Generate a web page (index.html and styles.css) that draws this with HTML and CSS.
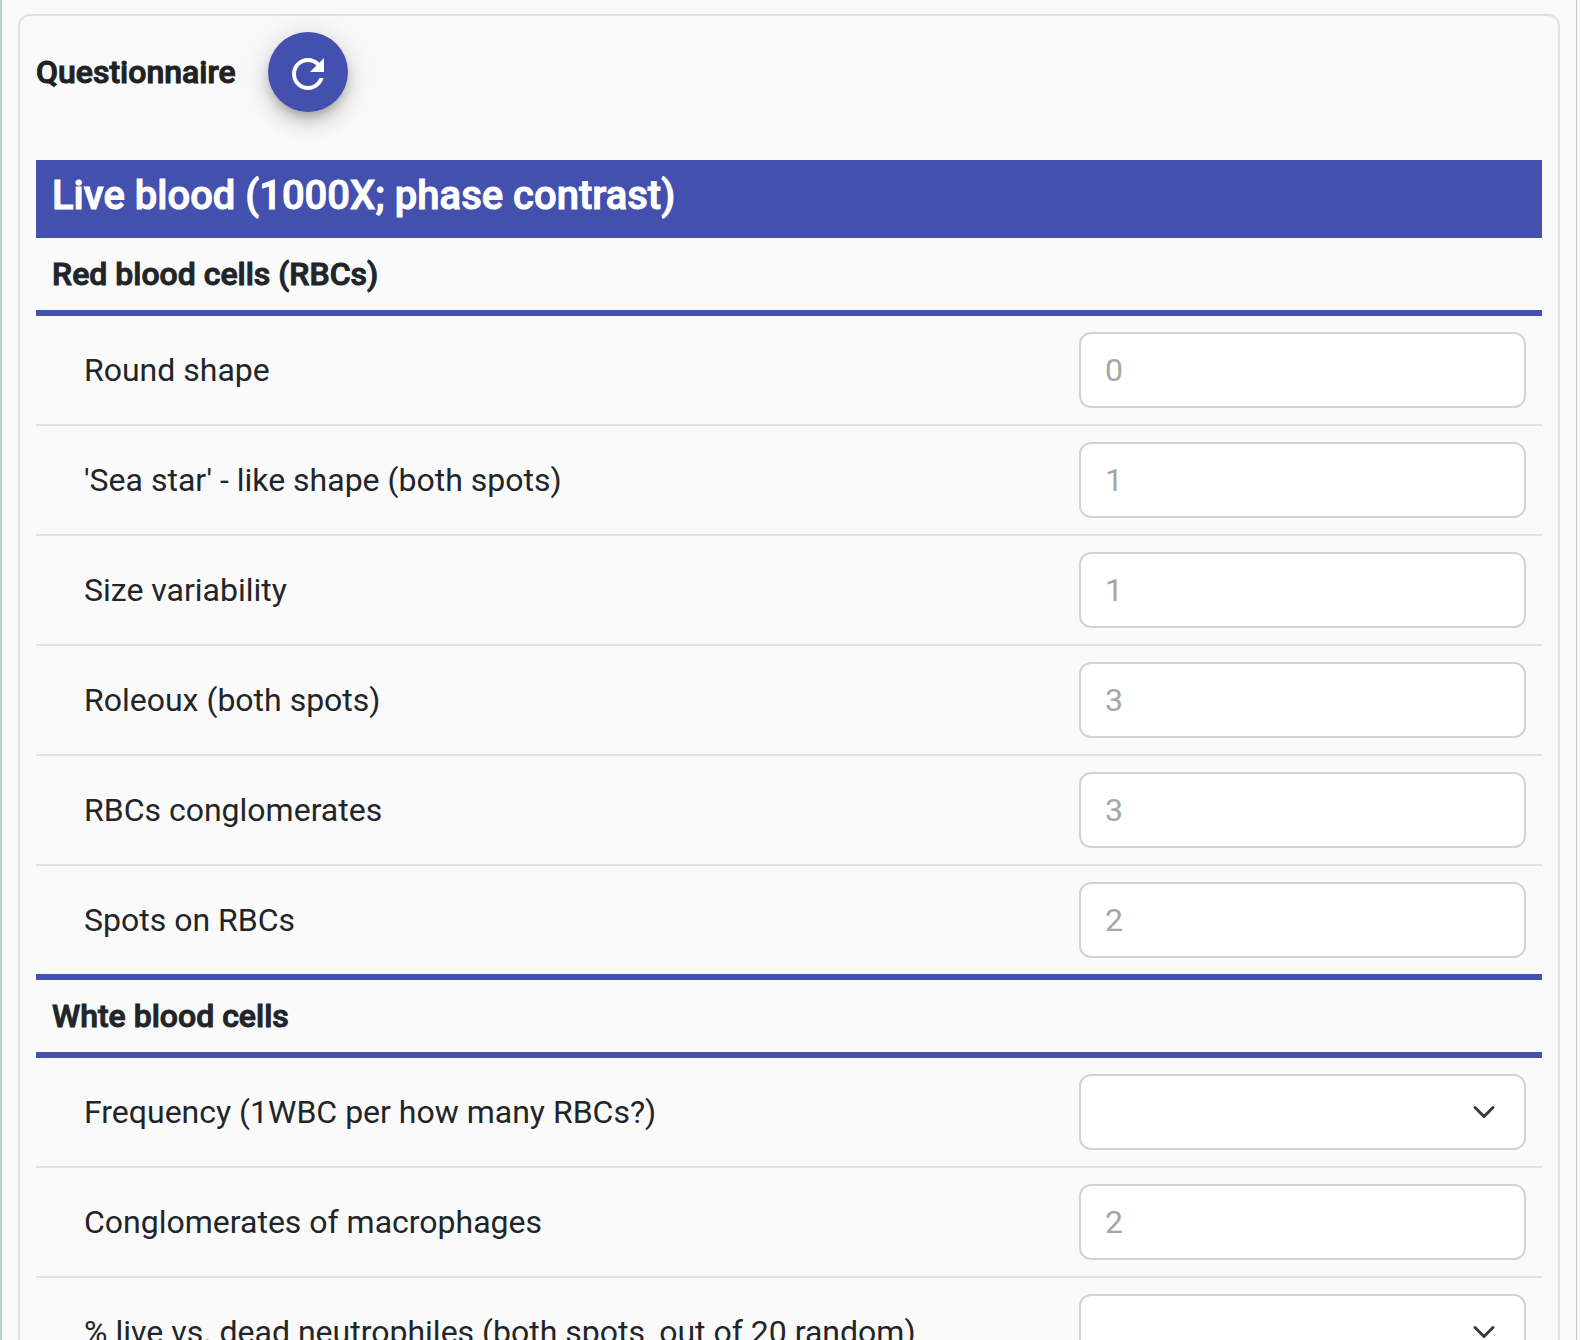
FILE: index.html
```html
<!DOCTYPE html>
<html lang="en">
<head>
<meta charset="utf-8">
<meta name="viewport" content="width=device-width, initial-scale=1">
<title>Questionnaire</title>
<link rel="stylesheet" href="styles.css">
</head>
<body>
<main class="panel">
  <form class="card">
    <header class="card-header">
      <h1 class="card-title">Questionnaire</h1>
      <button class="fab" type="button" aria-label="Reload">
        <svg class="fab-icon" viewBox="0 0 24 24" aria-hidden="true"><path fill="currentColor" d="M17.65 6.35C16.2 4.9 14.21 4 12 4c-4.42 0-7.99 3.58-7.99 8s3.57 8 7.99 8c3.73 0 6.84-2.55 7.73-6h-2.08c-.82 2.33-3.04 4-5.65 4-3.31 0-6-2.69-6-6s2.69-6 6-6c1.66 0 3.14.69 4.22 1.78L13 11h7V4l-2.35 2.35z"/></svg>
      </button>
    </header>

    <h2 class="banner">Live blood (1000X; phase contrast)</h2>

    <section class="group">
      <h3 class="group-title">Red blood cells (RBCs)</h3>
      <div class="row"><label class="label" for="round">Round shape</label><div class="field"><input class="control" id="round" type="text" placeholder="0"></div></div>
      <div class="row"><label class="label" for="star">'Sea star' - like shape (both spots)</label><div class="field"><input class="control" id="star" type="text" placeholder="1"></div></div>
      <div class="row"><label class="label" for="size">Size variability</label><div class="field"><input class="control" id="size" type="text" placeholder="1"></div></div>
      <div class="row"><label class="label" for="roleoux">Roleoux (both spots)</label><div class="field"><input class="control" id="roleoux" type="text" placeholder="3"></div></div>
      <div class="row"><label class="label" for="conglomerates">RBCs conglomerates</label><div class="field"><input class="control" id="conglomerates" type="text" placeholder="3"></div></div>
      <div class="row"><label class="label" for="spots">Spots on RBCs</label><div class="field"><input class="control" id="spots" type="text" placeholder="2"></div></div>
    </section>

    <section class="group">
      <h3 class="group-title">Whte blood cells</h3>
      <div class="row"><label class="label" for="frequency">Frequency (1WBC per how many RBCs?)</label><div class="field"><select class="control select" id="frequency"><option></option></select></div></div>
      <div class="row"><label class="label" for="macrophages">Conglomerates of macrophages</label><div class="field"><input class="control" id="macrophages" type="text" placeholder="2"></div></div>
      <div class="row"><label class="label" for="neutrophiles">% live vs. dead neutrophiles (both spots, out of 20 random)</label><div class="field"><select class="control select" id="neutrophiles"><option></option></select></div></div>
    </section>
  </form>
</main>
</body>
</html>
```
FILE: styles.css
```css
:root {
  --primary: #4450ae;
  --surface: #fafafa;
  --line: #dee2e6;
  --text: #212529;
}

* {
  box-sizing: border-box;
}

html {
  scrollbar-width: none;
}

body {
  margin: 0;
  background: var(--surface);
  color: var(--text);
  font: 400 32px/48px Roboto, "Liberation Sans", sans-serif;
}

.panel {
  min-height: 100vh;
  margin-right: 3px;
  padding: 14px 16px;
  border-left: 2px solid #bfd1cd;
  border-right: 1px solid #c8c8c8;
}

.card {
  padding: 16px;
  border: 2px solid var(--line);
  border-radius: 12px;
}

.card-header {
  display: flex;
  align-items: center;
  gap: 32px;
  margin-bottom: 48px;
}

.card-title,
.banner,
.group-title {
  margin: 0;
  font-weight: 500;
  -webkit-text-stroke: 1px currentColor;
}

.card-title {
  color: #212121;
  font-size: 32px;
}

.fab {
  display: grid;
  place-items: center;
  width: 80px;
  height: 80px;
  padding: 4px 0 0;
  border: 0;
  border-radius: 50%;
  background: var(--primary);
  color: #fff;
  box-shadow:
    0 6px 10px -2px rgba(0, 0, 0, 0.2),
    0 12px 20px rgba(0, 0, 0, 0.14),
    0 2px 36px rgba(0, 0, 0, 0.12);
}

.fab-icon {
  width: 48px;
  height: 48px;
}

.banner {
  padding: 12px 16px 18px;
  background: var(--primary);
  color: #fff;
  font-size: 40px;
}

.group + .group {
  border-top: 6px solid var(--primary);
}

.group-title {
  padding: 12px 16px;
  border-bottom: 6px solid var(--primary);
  font-size: 32px;
}

.row {
  display: grid;
  grid-template-columns: 1027fr 479fr;
  align-items: center;
}

.row + .row {
  border-top: 2px solid var(--line);
}

.label {
  padding-left: 48px;
}

.field {
  padding: 16px;
}

.control {
  display: block;
  width: 100%;
  height: 76px;
  padding: 12px 24px;
  border: 2px solid #ced4da;
  border-radius: 12px;
  background-color: #fff;
  color: var(--text);
  font: inherit;
}

.control::placeholder {
  color: #a6a6a6;
  opacity: 1;
}

.select {
  appearance: none;
  background-image: url("data:image/svg+xml,%3Csvg xmlns='http://www.w3.org/2000/svg' viewBox='0 0 16 16'%3E%3Cpath fill='none' stroke='%23343a40' stroke-linecap='round' stroke-linejoin='round' stroke-width='2' d='m2 5 6 6 6-6'/%3E%3C/svg%3E");
  background-repeat: no-repeat;
  background-position: right 28px center;
  background-size: 24px 24px;
}
```
